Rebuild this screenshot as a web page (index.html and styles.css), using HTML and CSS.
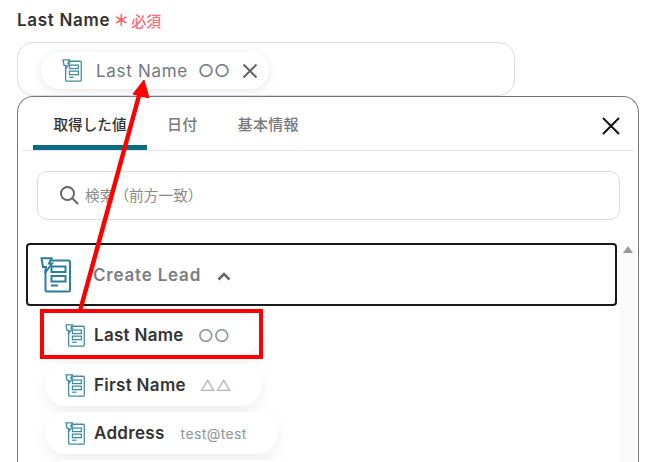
FILE: index.html
```html
<!DOCTYPE html>
<html lang="en">
<head>
    <meta charset="UTF-8">
    <meta name="viewport" content="width=device-width, initial-scale=1.0">
    <title>Last Name</title>
    <link rel="stylesheet" href="styles.css">
</head>
<body>

<svg class="icon-defs" width="0" height="0">
    <symbol id="doc-icon" viewBox="0 0 31 36">
        <path d="M10 3.500H28.500Q30 3.500 30 5V33Q30 34.500 28.500 34.500H7Q5.500 34.500 5.500 33V15" fill="none" stroke="currentColor" stroke-width="2"/>
        <path d="M1.500 1.200H11.500L9 6.500H12L5 16L6 10H3Z" fill="#fff" stroke="currentColor" stroke-width="2" stroke-linejoin="miter"/>
        <rect x="11.500" y="9.500" width="14" height="5.500" fill="none" stroke="currentColor" stroke-width="2"/>
        <rect x="11.500" y="19" width="14" height="5.500" fill="none" stroke="currentColor" stroke-width="2"/>
        <path d="M11 28.500H18" stroke="currentColor" stroke-width="2"/>
    </symbol>
</svg>

<div class="page">
    <div class="field-label">
        <span class="label-text">Last Name</span>
        <span class="required-star">＊</span>
        <span class="required-text">必須</span>
    </div>

    <div class="field-input">
        <div class="chip">
            <svg class="chip-icon"><use href="#doc-icon"/></svg>
            <span class="chip-name">Last Name</span>
            <span class="chip-value">○○</span>
            <svg class="chip-close" viewBox="0 0 16 16"><path d="M1.500 1.500L14.500 14.500M14.500 1.500L1.500 14.500"/></svg>
        </div>
    </div>

    <div class="panel">
        <div class="tabs">
            <div class="tab tab-active">取得した値</div>
            <div class="tab tab-date">日付</div>
            <div class="tab tab-info">基本情報</div>
            <svg class="panel-close" viewBox="0 0 18 18"><path d="M1 1L17 17M17 1L1 17"/></svg>
        </div>

        <div class="search">
            <svg class="search-icon" viewBox="0 0 20 20"><circle cx="8.500" cy="8.500" r="6.500"/><path d="M13.500 13.500L19 19"/></svg>
            <span class="search-text">検索（前方一致）</span>
        </div>

        <div class="list-area">
            <div class="list-main">
                <div class="group-head">
                    <svg class="group-icon"><use href="#doc-icon"/></svg>
                    <span class="group-name">Create Lead</span>
                    <svg class="group-caret" viewBox="0 0 14 9"><path d="M1.500 7.500L7 2L12.500 7.500"/></svg>
                </div>
                <div class="rows">
                    <div class="row row-last">
                        <svg class="row-icon"><use href="#doc-icon"/></svg>
                        <span class="row-name">Last Name</span>
                        <span class="row-value value-mark">○○</span>
                    </div>
                    <div class="row row-first">
                        <svg class="row-icon"><use href="#doc-icon"/></svg>
                        <span class="row-name">First Name</span>
                        <span class="row-value value-mark value-light">△△</span>
                    </div>
                    <div class="row row-address">
                        <svg class="row-icon"><use href="#doc-icon"/></svg>
                        <span class="row-name">Address</span>
                        <span class="row-value row-email">test@test</span>
                    </div>
                    <div class="row row-next"></div>
                </div>
            </div>
            <div class="scrollbar"><div class="scroll-up"></div></div>
        </div>
    </div>

    <div class="red-box"></div>
    <svg class="red-arrow" viewBox="0 0 650 462">
        <path class="arrow-line" d="M80 311L140 92"/>
        <path class="arrow-head" d="M144 80L149 98L133 94Z"/>
    </svg>
</div>

</body>
</html>
```

FILE: styles.css
```css
* {
    box-sizing: border-box;
}

html, body {
    margin: 0;
    height: 462px;
    overflow: hidden;
    background-color: #fff;
}

body {
    font-family: 'Inter', 'Noto Sans CJK JP', sans-serif;
    color: #333;
}

.icon-defs {
    display: block;
    height: 0;
}

.page {
    position: relative;
    width: 650px;
    height: 462px;
    padding: 9px 11px 0 17px;
    overflow: hidden;
}

.field-label {
    display: flex;
    align-items: center;
    height: 22px;
}

.label-text {
    font-size: 17px;
    font-weight: 600;
    letter-spacing: 0.7px;
    color: #333;
}

.required-star {
    margin-left: 3px;
    font-size: 16px;
    line-height: 22px;
    font-weight: 700;
    color: #ff5a6e;
}

.required-text {
    margin-left: 2px;
    font-size: 15px;
    font-weight: 500;
    color: #ff6b7c;
}

.field-input {
    width: 498px;
    height: 54px;
    margin-top: 11px;
    padding: 9px 0 0 23px;
    border: 1px solid #d9dde5;
    border-radius: 16px;
}

.chip {
    display: flex;
    align-items: center;
    width: 228px;
    height: 37px;
    padding-left: 21px;
    border-radius: 19px;
    background-color: #fff;
    box-shadow: 0 2px 10px rgba(0, 0, 0, 0.1);
}

.chip-icon {
    width: 20px;
    height: 23px;
    color: #3f8ca3;
}

.chip-name {
    margin-left: 14px;
    font-size: 17px;
    letter-spacing: 0.7px;
    color: #72777f;
}

.chip-value {
    margin-left: 10px;
    font-size: 17.500px;
    color: #72777f;
}

.chip-close {
    width: 16px;
    height: 16px;
    margin-left: 12px;
    fill: none;
    stroke: #666;
    stroke-width: 2;
}

.panel {
    width: 622px;
    height: 380px;
    border: 1px solid #777;
    border-bottom: 0;
    border-radius: 16px 16px 0 0;
}

.tabs {
    display: flex;
    align-items: flex-start;
    height: 54px;
    margin: 0 4px;
    border-bottom: 1px solid #e4e6ea;
}

.tab {
    height: 53px;
    padding-top: 18px;
    font-size: 15px;
    line-height: 20px;
    font-weight: 500;
    letter-spacing: 0.3px;
    color: #77797c;
}

.tab-active {
    width: 114px;
    margin-left: 11px;
    text-align: center;
    font-size: 14.600px;
    letter-spacing: 0;
    color: #333;
    border-bottom: 5px solid #0a6a83;
    border-radius: 4px 4px 0 0;
}

.tab-date {
    margin-left: 20px;
}

.tab-info {
    margin-left: 40px;
}

.panel-close {
    width: 18px;
    height: 18px;
    margin: 20px 0 0 auto;
    margin-right: 14px;
    fill: none;
    stroke: #111;
    stroke-width: 2;
}

.search {
    display: flex;
    align-items: center;
    width: 583px;
    height: 49px;
    margin: 20px 0 0 19px;
    padding: 0 0 2px 21px;
    border: 1px solid #dcdcdc;
    border-radius: 10px;
}

.search-icon {
    width: 20px;
    height: 20px;
    fill: none;
    stroke: #666;
    stroke-width: 2;
}

.search-text {
    margin-left: 6px;
    font-size: 14.700px;
    color: #8a8a8a;
}

.list-area {
    display: flex;
    margin-top: 20px;
}

.list-main {
    width: 602px;
    padding: 3px 0 0 8px;
}

.group-head {
    display: flex;
    align-items: center;
    width: 591px;
    height: 63px;
    padding-left: 12px;
    border: 2px solid #1a1a1a;
    border-radius: 4px;
}

.group-icon {
    width: 31px;
    height: 36px;
    color: #2b7f98;
}

.group-name {
    margin-left: 22px;
    font-size: 17px;
    font-weight: 600;
    letter-spacing: 0.8px;
    color: #7b7e83;
}

.group-caret {
    width: 14px;
    height: 9px;
    margin: 3px 0 0 16px;
    fill: none;
    stroke: #666;
    stroke-width: 2.500;
}

.rows {
    display: flex;
    flex-direction: column;
    align-items: flex-start;
    gap: 6px;
    padding: 9px 0 0 19px;
}

.row {
    display: flex;
    align-items: center;
    height: 42px;
    padding-left: 20px;
    border-radius: 21px;
    background-color: #fff;
    box-shadow: 0 4px 14px rgba(0, 0, 0, 0.07);
}

.row-last {
    width: 215px;
    height: 40px;
    margin-bottom: 3px;
}

.row-first {
    width: 217px;
}

.row-address {
    width: 233px;
}

.row-next {
    width: 250px;
}

.row-icon {
    width: 20px;
    height: 23px;
    color: #3f8ca3;
}

.row-name {
    margin-left: 9px;
    font-size: 17px;
    font-weight: 600;
    letter-spacing: 0.3px;
    color: #333;
}

.row-value {
    margin-left: 14px;
    color: #8f9296;
}

.row-email {
    margin-left: 16px;
    font-size: 14px;
    letter-spacing: 0.4px;
}

.value-mark {
    font-size: 17.500px;
}

.value-light {
    font-size: 15.500px;
    color: #b5b7ba;
}

.scrollbar {
    width: 16px;
    background-color: #fafafa;
    padding: 6px 0 0 3px;
}

.scroll-up {
    width: 0;
    height: 0;
    border-left: 5px solid transparent;
    border-right: 5px solid transparent;
    border-bottom: 7px solid #999;
}

.red-box {
    position: absolute;
    left: 40px;
    top: 309px;
    width: 223px;
    height: 50px;
    border: 4px solid #f00;
}

.red-arrow {
    position: absolute;
    left: 0;
    top: 0;
    width: 650px;
    height: 462px;
}

.arrow-line {
    fill: none;
    stroke: #f00;
    stroke-width: 4.500;
}

.arrow-head {
    fill: #f00;
    stroke: #f00;
    stroke-width: 1;
}
```
